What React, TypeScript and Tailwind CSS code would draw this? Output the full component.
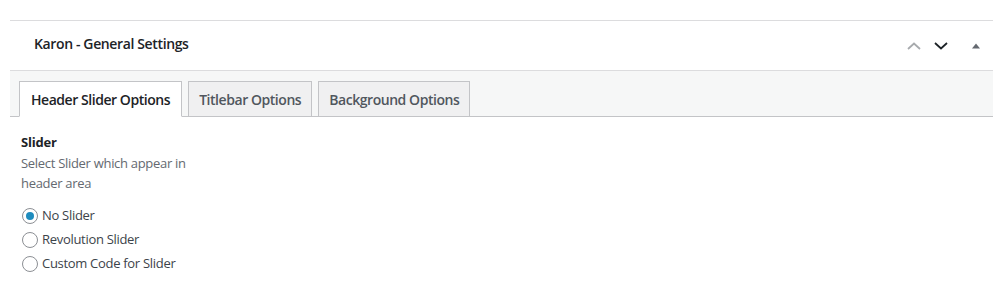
import React from "react";

const font = { fontFamily: '"Segoe UI", "Open Sans", "Noto Sans", sans-serif' };

function Radio({ checked, label }: { checked?: boolean; label: string }) {
  return (
    <label className="flex items-center h-[24px]">
      <span className="ml-[1px] w-[16px] h-[16px] rounded-full border border-[#8c8f94] bg-white flex items-center justify-center">
        {checked && <span className="w-[8px] h-[8px] rounded-full bg-[#1e8cbe]" />}
      </span>
      <span className="ml-[4px] text-[13px] text-[#3c434a] tracking-[-0.3px]">{label}</span>
    </label>
  );
}

export default function App() {
  return (
    <div className="w-[993px] h-[289px] bg-white overflow-hidden" style={font}>
      <div className="h-[20px]" />
      <div className="ml-[10px] border-t border-[#dcdcde]">
        <div className="h-[50px] flex items-center justify-between border-b border-[#dcdcde]">
          <div className="pl-[24px] pb-[5px] text-[14px] font-semibold text-[#1d2327] tracking-[-0.37px]">
            Karon - General Settings
          </div>
          <div className="flex items-center pr-[12px]">
            <svg width="16" height="16" viewBox="0 0 16 16" className="mr-[11px] mt-[1px]">
              <path d="M2 11 L8 5.5 L14 11" fill="none" stroke="#a7aaad" strokeWidth="1.8" />
            </svg>
            <svg width="16" height="16" viewBox="0 0 16 16" className="mr-[22px] mt-[1px]">
              <path d="M2 5 L8 10.5 L14 5" fill="none" stroke="#1d2327" strokeWidth="1.8" />
            </svg>
            <svg width="10" height="10" viewBox="0 0 10 10">
              <path d="M1 7.5 L5 2.5 L9 7.5 Z" fill="#646970" />
            </svg>
          </div>
        </div>
        <div className="bg-[#f6f7f7] border-b border-[#c3c4c7] h-[46px] flex items-end pl-[9px] gap-[6px]">
          <div className="h-[36px] -mb-[1px] px-[11px] bg-white border border-[#c3c4c7] border-b-white flex items-center text-[14px] font-semibold text-[#1d2327] tracking-[-0.45px]">
            Header Slider Options
          </div>
          <div className="h-[35px] px-[10px] bg-[#f0f0f1] border border-[#c3c4c7] border-b-0 flex items-center text-[14px] font-semibold text-[#50575e] tracking-[-0.45px]">
            Titlebar Options
          </div>
          <div className="h-[35px] px-[10px] bg-[#f0f0f1] border border-[#c3c4c7] border-b-0 flex items-center text-[14px] font-semibold text-[#50575e] tracking-[-0.45px]">
            Background Options
          </div>
        </div>
        <div className="pl-[11px] pt-[15px]">
          <div className="text-[13px] font-bold text-[#1d2327] leading-[20px] tracking-[-0.2px]">Slider</div>
          <div className="mt-[1px] w-[180px] text-[13px] text-[#646970] leading-[20px] tracking-[-0.3px]">
            Select Slider which appear in header area
          </div>
          <div className="mt-[11px] flex flex-col">
            <Radio checked label="No Slider" />
            <Radio label="Revolution Slider" />
            <Radio label="Custom Code for Slider" />
          </div>
        </div>
      </div>
    </div>
  );
}
